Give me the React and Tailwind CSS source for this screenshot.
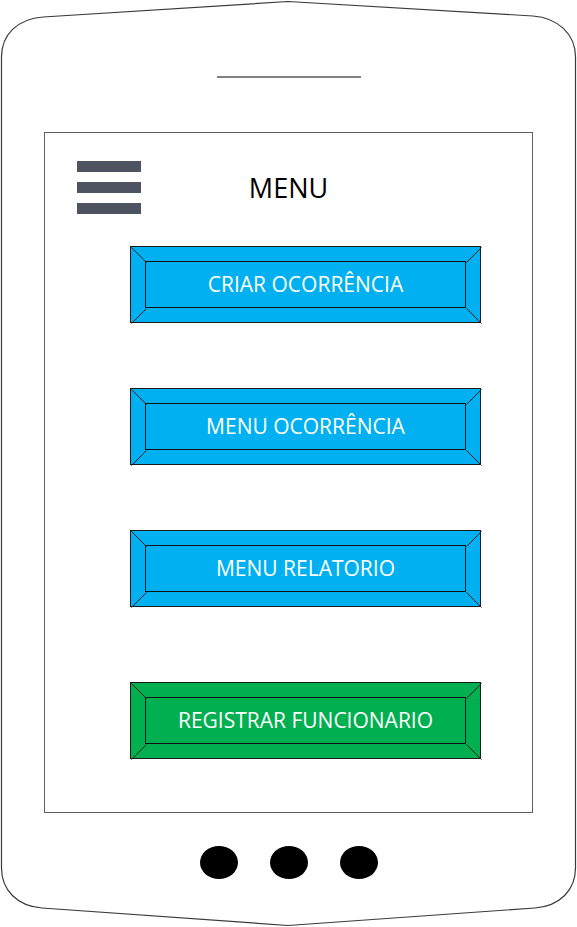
import React from "react";

function Bevel({ color, label }) {
  return (
    <div className={`relative w-[351px] h-[77px] border border-[#1a1a1a] p-[14px] ${color}`}>
      <svg
        className="absolute inset-0 pointer-events-none"
        width="351"
        height="77"
        viewBox="0 0 351 77"
      >
        <g stroke="#1a1a1a" strokeWidth="1">
          <line x1="0.5" y1="0.5" x2="15.5" y2="15.5" />
          <line x1="350.5" y1="0.5" x2="335.5" y2="15.5" />
          <line x1="0.5" y1="76.5" x2="15.5" y2="61.5" />
          <line x1="350.5" y1="76.5" x2="335.5" y2="61.5" />
        </g>
      </svg>
      <div className="relative h-full w-full border border-[#111] flex items-center justify-center text-white text-[21px] leading-none font-['Open_Sans',sans-serif]">
        {label}
      </div>
    </div>
  );
}

export default function App() {
  return (
    <div className="relative w-[577px] h-[927px] bg-white overflow-hidden font-['Open_Sans',sans-serif]">
      <svg
        className="absolute inset-0 pointer-events-none"
        width="577"
        height="927"
        viewBox="0 0 577 927"
      >
        <path
          d="M1.5 57 C1.5 34 18 19 43 17 L288 1.5 L533 16 C558 18 575.5 34 575.5 57 L575.5 868 C575.5 890 560 906 535 908 L288 925.5 L42 908 C17 906 1.5 890 1.5 868 Z"
          fill="none"
          stroke="#3a3a3a"
          strokeWidth="1.2"
        />
      </svg>

      <div className="relative flex flex-col items-center">
        <div className="mt-[76px] h-[2px] w-[144px] bg-[#808080]" />

        <div className="mt-[54px] w-[489px] h-[681px] border border-[#5f5f5f] flex flex-col">
          <div className="pt-[28px] grid grid-cols-[1fr_auto_1fr] items-center">
            <div className="pl-[32px] flex flex-col gap-[10px]">
              <div className="w-[64px] h-[11px] bg-[#4d5360]" />
              <div className="w-[64px] h-[11px] bg-[#4d5360]" />
              <div className="w-[64px] h-[11px] bg-[#4d5360]" />
            </div>
            <div className="text-[27px] leading-[34px] text-black">MENU</div>
            <div />
          </div>

          <div className="ml-[85px] mt-[32px]">
            <Bevel color="bg-[#00b0f0]" label="CRIAR OCORRÊNCIA" />
          </div>
          <div className="ml-[85px] mt-[65px]">
            <Bevel color="bg-[#00b0f0]" label="MENU OCORRÊNCIA" />
          </div>
          <div className="ml-[85px] mt-[65px]">
            <Bevel color="bg-[#00b0f0]" label="MENU RELATORIO" />
          </div>
          <div className="ml-[85px] mt-[75px]">
            <Bevel color="bg-[#00b050]" label="REGISTRAR FUNCIONARIO" />
          </div>
        </div>

        <div className="mt-[33px] flex gap-[32px]">
          <div className="w-[38px] h-[33px] rounded-[50%] bg-black" />
          <div className="w-[38px] h-[33px] rounded-[50%] bg-black" />
          <div className="w-[38px] h-[33px] rounded-[50%] bg-black" />
        </div>
      </div>
    </div>
  );
}
